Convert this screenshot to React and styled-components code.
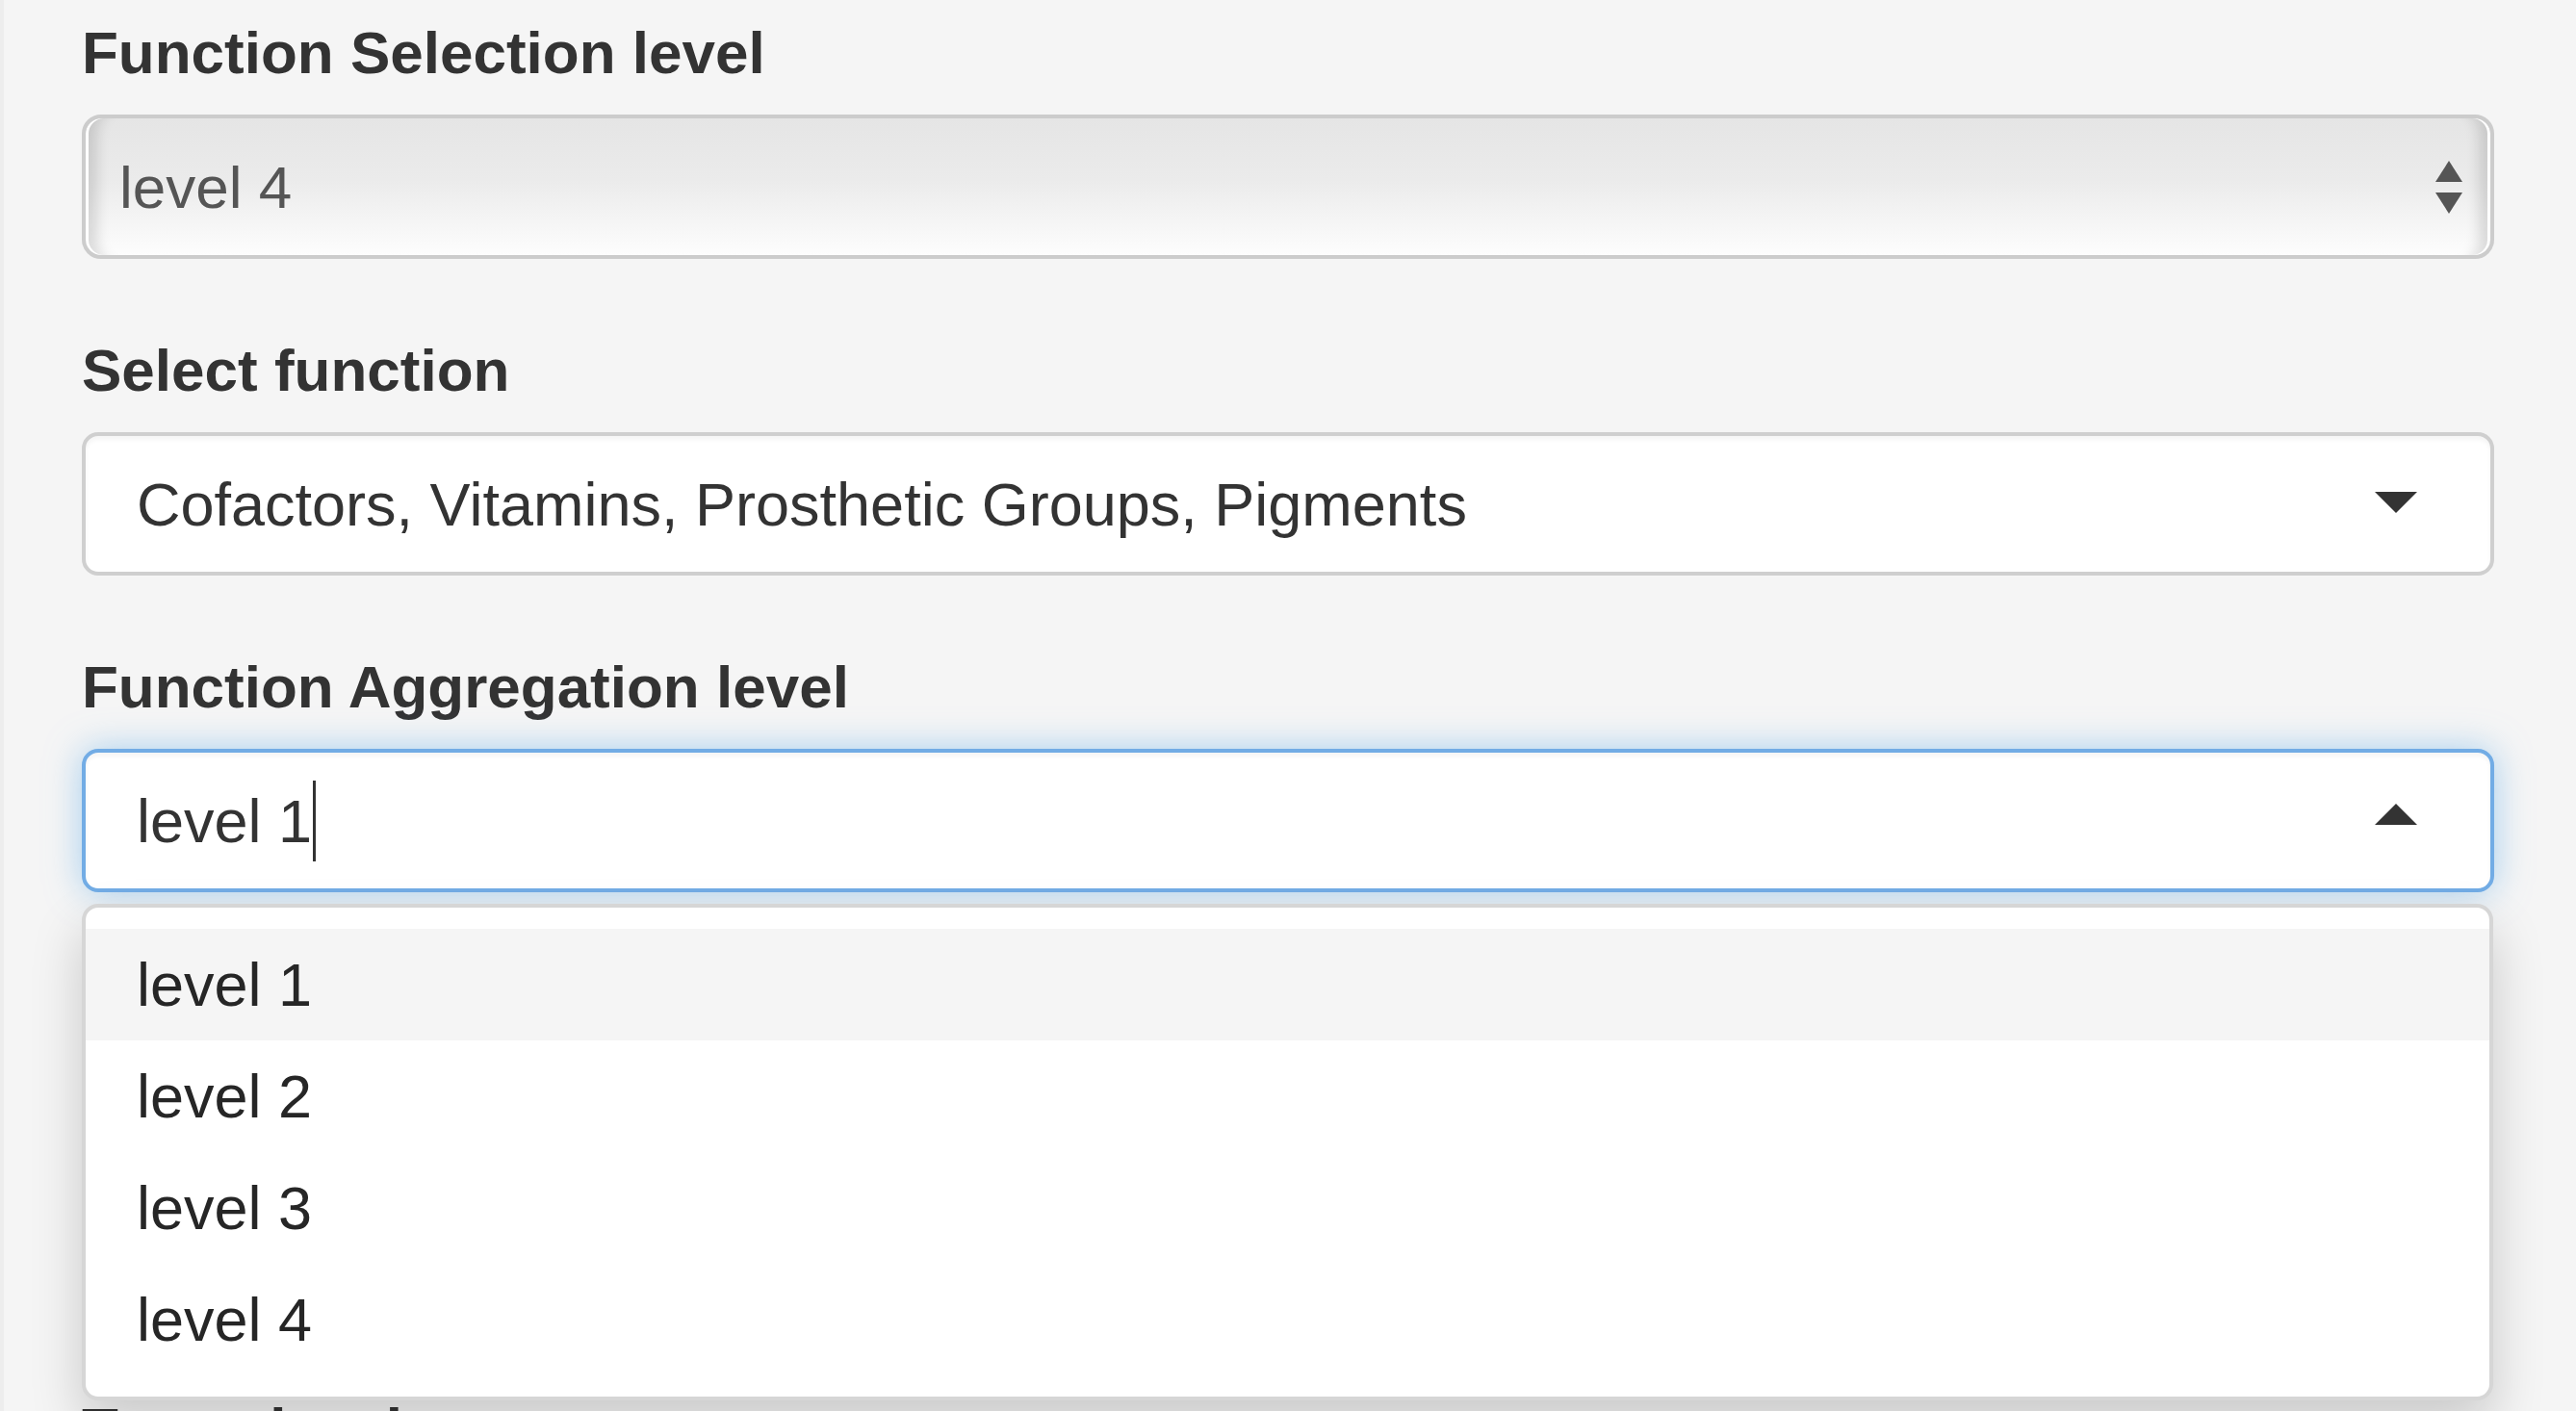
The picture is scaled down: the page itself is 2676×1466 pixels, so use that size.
import React from 'react';
import styled, { createGlobalStyle, css } from 'styled-components';

const GlobalStyle = createGlobalStyle`
  html, body { margin: 0; padding: 0; background: #f5f5f5; }
  body {
    font-family: "Liberation Sans", Arial, Helvetica, sans-serif;
    color: #333;
    overflow: hidden;
  }
  * { box-sizing: border-box; }
`;

const Well = styled.div`
  min-height: 1466px;
  background: #f5f5f5;
  border-left: 4px solid #ededed;
  padding: 11px 85px 0 81px;
`;

const FormGroup = styled.div`
  margin-bottom: ${(p) => (p.$gapAfter ? p.$gapAfter : 73)}px;
`;

const Label = styled.label`
  display: block;
  font-weight: 700;
  font-size: 62px;
  line-height: 88px;
  margin-bottom: 20px;
  color: #333;
`;

const NativeSelect = styled.div`
  height: 150px;
  border: 4px solid #cccccc;
  border-radius: 20px;
  background: linear-gradient(to bottom, #e5e5e5 0%, #ebebeb 45%, #fdfdfd 100%);
  box-shadow:
    inset 3px 0 0 #ffffff,
    inset -3px 0 0 #ffffff,
    inset 26px 0 14px -14px rgba(0, 0, 0, 0.13),
    inset -26px 0 14px -14px rgba(0, 0, 0, 0.13);
  display: flex;
  align-items: center;
  justify-content: space-between;
  padding: 0 29px 0 35px;
  font-size: 62px;
  color: #555;
`;

const SelectWrap = styled.div`
  position: relative;
`;

const Selectize = styled.div`
  height: 149px;
  border: 4px solid #cfcfcf;
  border-radius: 17px;
  background: #fff;
  box-shadow: inset 0 4px 4px rgba(0, 0, 0, 0.04);
  display: flex;
  align-items: center;
  justify-content: space-between;
  padding: 0 76px 0 53px;
  font-size: 63px;
  color: #333;
  ${(p) =>
    p.$focused &&
    css`
      border-color: #72ace5;
      box-shadow: inset 0 4px 4px rgba(0, 0, 0, 0.04),
        0 0 36px rgba(102, 175, 233, 0.55);
    `}
`;

const Value = styled.span`
  display: inline-flex;
  align-items: center;
  white-space: nowrap;
`;

const Cursor = styled.span`
  display: inline-block;
  width: 3px;
  height: 84px;
  margin-left: 1px;
  background: #333;
`;

const Caret = styled.span`
  width: 0;
  height: 0;
  border-left: 22px solid transparent;
  border-right: 22px solid transparent;
  ${(p) =>
    p.$up
      ? css`
          border-bottom: 22px solid #333;
          margin-top: -13px;
        `
      : css`
          border-top: 22px solid #333;
          margin-top: -4px;
        `}
`;

const Dropdown = styled.div`
  position: absolute;
  top: calc(100% + 12px);
  left: 0;
  right: 1px;
  z-index: 10;
  background: #fff;
  border: 4px solid #d6d6d6;
  border-radius: 17px;
  box-shadow: 0 26px 53px rgba(0, 0, 0, 0.175);
  padding: 22px 0 22px;
`;

const Option = styled.div`
  height: 116px;
  line-height: 116px;
  padding: 0 53px;
  font-size: 63px;
  color: #262626;
  background: ${(p) => (p.$active ? '#f5f5f5' : '#fff')};
`;

const UpDown = () => (
  <svg width="28" height="55" viewBox="0 0 28 55">
    <polygon points="14,0 28,22 0,22" fill="#555" />
    <polygon points="0,33 28,33 14,55" fill="#555" />
  </svg>
);

const levels = ['level 1', 'level 2', 'level 3', 'level 4'];

export default function App() {
  return (
    <>
      <GlobalStyle />
      <Well>
        <FormGroup $gapAfter={72}>
          <Label>Function Selection level</Label>
          <NativeSelect>
            <Value>level 4</Value>
            <UpDown />
          </NativeSelect>
        </FormGroup>

        <FormGroup $gapAfter={72}>
          <Label>Select function</Label>
          <Selectize>
            <Value>Cofactors, Vitamins, Prosthetic Groups, Pigments</Value>
            <Caret />
          </Selectize>
        </FormGroup>

        <FormGroup $gapAfter={514}>
          <Label>Function Aggregation level</Label>
          <SelectWrap>
            <Selectize $focused>
              <Value>
                level 1<Cursor />
              </Value>
              <Caret $up />
            </Selectize>
            <Dropdown>
              {levels.map((l, i) => (
                <Option key={l} $active={i === 0}>
                  {l}
                </Option>
              ))}
            </Dropdown>
          </SelectWrap>
        </FormGroup>

        <FormGroup>
          <Label>Taxon level</Label>
        </FormGroup>
      </Well>
    </>
  );
}
